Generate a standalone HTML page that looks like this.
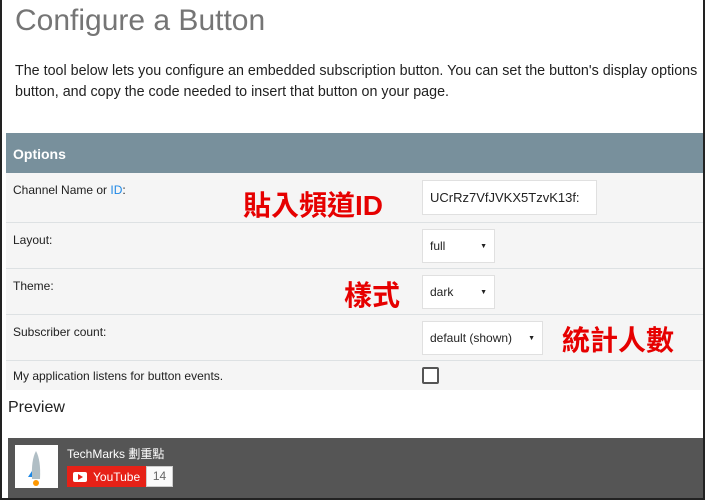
<!DOCTYPE html>
<html><head><meta charset="utf-8"><style>
*{margin:0;padding:0;box-sizing:border-box}
body{width:705px;height:500px;overflow:hidden;background:#fff;font-family:"Liberation Sans","Noto Sans CJK TC",sans-serif;position:relative}
.frame{position:absolute;left:0;top:0;width:705px;height:500px;border:2px solid #222;border-top:none;z-index:5;pointer-events:none}
.abs{position:absolute;white-space:nowrap}
h1{position:absolute;left:15px;top:4px;font-size:30px;font-weight:400;color:#757575}
p{position:absolute;left:15px;top:61px;font-size:14.3px;line-height:21px;color:#212121;white-space:nowrap}
.tbl{position:absolute;left:6px;top:133px;width:700px}
.hd{height:40px;background:#78909c;color:#fff;font-weight:bold;font-size:14px;padding:13px 0 0 7px}
.row{background:#f5f5f5;border-top:1px solid #dde1e3;position:relative;font-size:12px;color:#212121;padding:10px 0 0 7px}
.box{position:absolute;left:416px;background:#fff;border:1px solid #e0e0e0;font-size:12px;color:#222;padding:0 7px;display:flex;align-items:center}
.red{position:absolute;color:#e60000;font-weight:bold;font-size:28px}
.car{font-size:7px;margin-left:auto}
</style></head><body>
<div class="frame"></div>
<h1>Configure a Button</h1>
<p>The tool below lets you configure an embedded subscription button. You can set the button's display options<br>button, and copy the code needed to insert that button on your page.</p>
<div class="tbl">
<div class="hd">Options</div>
<div class="row" style="height:49px;border-top:none">Channel Name or <span style="color:#1e88e5">ID</span>:
<div class="box" style="top:7px;width:175px;height:35px;font-size:13px;overflow:hidden">UCrRz7VfJVKX5TzvK13f:</div></div>
<div class="row" style="height:46px">Layout:<div class="box" style="top:6px;width:73px;height:34px">full<span class="car">▼</span></div></div>
<div class="row" style="height:46px">Theme:<div class="box" style="top:6px;width:73px;height:34px">dark<span class="car">▼</span></div></div>
<div class="row" style="height:46px">Subscriber count:<div class="box" style="top:6px;width:121px;height:34px">default (shown)<span class="car">▼</span></div></div>
<div class="row" style="height:30px;padding-top:8px">My application listens for button events.<div style="position:absolute;left:416px;top:6px;width:17px;height:17px;border:2px solid #555;border-radius:2px;background:#fff"></div></div>
</div>
<div class="red" style="left:243px;top:184px">貼入頻道ID</div>
<div class="red" style="left:344px;top:274px">樣式</div>
<div class="red" style="left:562px;top:319px">統計人數</div>
<div class="abs" style="left:8px;top:399px;font-size:16px;color:#212121">Preview</div>
<div style="position:absolute;left:8px;top:438px;width:697px;height:60px;background:#555"></div>
<div style="position:absolute;left:15px;top:445px;width:43px;height:43px;background:#fff">
<svg width="43" height="43"><path d="M21 6 Q16 15 17 34 L25 34 Q26 15 21 6Z" fill="#b0bec5"/><path d="M17 26 L13 32 L17 32Z" fill="#1e88e5"/><circle cx="21" cy="38" r="3" fill="#ff9800"/></svg></div>
<div class="abs" style="left:67px;top:445px;color:#fff;font-size:12px">TechMarks 劃重點</div>
<div style="position:absolute;left:67px;top:466px;width:79px;height:21px;background:#e62117;color:#fff;font-size:12px;display:flex;align-items:center;padding-left:6px">
<span style="display:inline-block;width:14px;height:10px;background:#fff;border-radius:2px;position:relative;margin-right:6px"><span style="position:absolute;left:5px;top:2px;border-left:5px solid #e62117;border-top:3px solid transparent;border-bottom:3px solid transparent"></span></span>YouTube</div>
<div style="position:absolute;left:146px;top:466px;width:27px;height:21px;background:#fafafa;border:1px solid #ccc;color:#666;font-size:12px;text-align:center;line-height:19px">14</div>
</body></html>
